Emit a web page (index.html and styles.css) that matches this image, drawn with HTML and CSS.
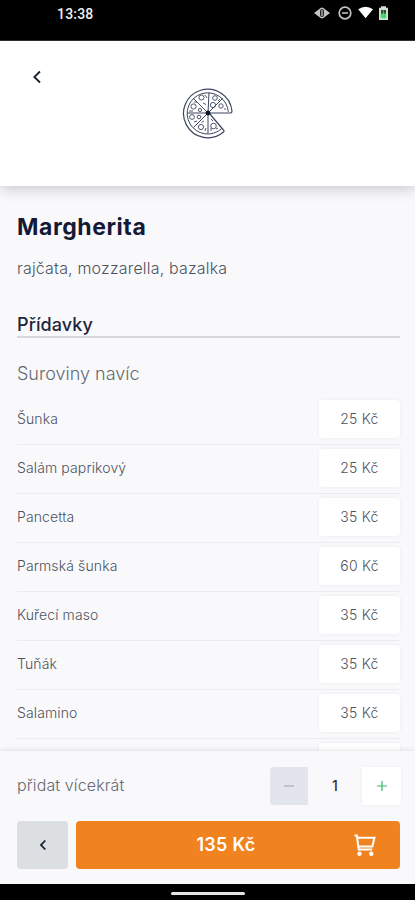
FILE: index.html
```html
<!DOCTYPE html>
<html lang="cs">
<head>
<meta charset="utf-8">
<meta name="viewport" content="width=device-width, initial-scale=1">
<title>Margherita</title>
<link rel="stylesheet" href="styles.css">
</head>
<body>
<div class="phone">
  <div class="status">
    <span class="clock">13:38</span>
    <svg class="status-icons" width="76" height="16" viewBox="0 0 76 16">
      <path d="M0 8 5 4.200Q8 .8 11 4.200L16 8l-5 3.800Q8 15.200 5 11.800z" fill="#c4c4c4"/>
      <rect x="6.500" y="4.500" width="3" height="7" rx="1" fill="#888" stroke="#222"/>
      <circle cx="31" cy="8" r="5.800" fill="none" stroke="#c4c4c4" stroke-width="1.700"/>
      <path d="M28 8h6" stroke="#c4c4c4" stroke-width="1.600"/>
      <path d="M44.200 4.300Q51.600-.8 59 4.300L51.600 13.300z" fill="#fff"/>
      <path d="M67 1.200h5v1.600h2V15h-9V2.800h2z" fill="#d6ddd6"/>
      <path d="M67 5h5v8h-5z" fill="#28522f"/>
      <path d="M69.500 5.500v6M67 9h5v4h-5z" stroke="#55e476" stroke-width=".7" fill="#46cf68"/>
    </svg>
  </div>
  <header class="header">
    <svg class="back-icon" width="10" height="14" viewBox="0 0 10 14"><path d="M8 1.500 2.300 7 8 12.500"/></svg>
    <svg class="pizza" width="52" height="52" viewBox="0 0 52 52">
      <g fill="none" stroke="#3c465f">
        <path stroke-width="1.200" d="M27 26h21.500q1.500 0 1.500-2A24.300 24.300 0 1 0 41.500 45q1-1 0-2z"/>
        <path stroke-width="1" d="M46.300 24.800A20.600 20.600 0 1 0 39.800 41.500"/>
        <path stroke-width="1" d="M26 26 11 11M26 26 27 5.500M26 26 41 11M26 26H5.500M26 26 11.500 40.500M26 26v20.500"/>
        <g stroke-width=".9">
          <circle cx="19.500" cy="10.500" r="2.500"/><circle cx="33" cy="11" r="2.300"/><circle cx="31" cy="18" r="2.600"/>
          <circle cx="11.500" cy="19.500" r="2.600"/><circle cx="18" cy="23" r="1.600"/><circle cx="10" cy="30" r="2.400"/>
          <circle cx="17" cy="30" r="1.800"/><circle cx="19" cy="40" r="2.600"/><circle cx="31.500" cy="39" r="2.800"/>
          <circle cx="39" cy="19" r="2.200"/><path d="m21 16 3 1.500M22 34l-2.500 1.500M29 32l2 2M12 35l3-1M34 42l2-1M42 22h2M29 44v-3M23 44l1-3M7 24h4M23 8l2 3M15 15l-3 0M36 14l2-2"/>
        </g>
      </g>
      <circle cx="26" cy="26" r="2.400" fill="#10182f"/>
    </svg>
  </header>
  <main class="content">
    <h1 class="title"><span>Margherita</span></h1>
    <p class="description"><span>rajčata, mozzarella, bazalka</span></p>
    <h2 class="section"><span>Přídavky</span></h2>
    <h3 class="group"><span>Suroviny navíc</span></h3>
    <ul class="extras">
      <li><span>Šunka</span><button class="price">25 Kč</button></li>
      <li><span>Salám paprikový</span><button class="price">25 Kč</button></li>
      <li><span>Pancetta</span><button class="price">35 Kč</button></li>
      <li><span>Parmská šunka</span><button class="price">60 Kč</button></li>
      <li><span>Kuřecí maso</span><button class="price">35 Kč</button></li>
      <li><span>Tuňák</span><button class="price">35 Kč</button></li>
      <li><span>Salamino</span><button class="price">35 Kč</button></li>
      <li><span></span><button class="price"></button></li>
    </ul>
  </main>
  <footer class="footer">
    <div class="quantity">
      <span class="quantity-label">přidat vícekrát</span>
      <div class="stepper">
        <button class="step minus"><svg width="12" height="12" viewBox="0 0 12 12"><path d="M1 6h10"/></svg></button>
        <span class="count">1</span>
        <button class="step plus"><svg width="12" height="12" viewBox="0 0 12 12"><path d="M1 6h10M6 1v10"/></svg></button>
      </div>
    </div>
    <div class="actions">
      <button class="back"><svg width="8" height="12" viewBox="0 0 8 12"><path d="M6.300 1.500 2 6l4.300 4.500"/></svg></button>
      <button class="order"><span>135 Kč</span>
        <svg class="cart" width="24" height="24" viewBox="0 0 24 24"><path d="M1.500 2.500h2.300l1.900 14h13.500M4.500 4.800h17l-2.200 8.700H5.500"/><circle cx="6.500" cy="20.800" r="2.200"/><circle cx="18.300" cy="20.800" r="2.200"/></svg>
      </button>
    </div>
  </footer>
  <div class="home"><i></i></div>
</div>
</body>
</html>
```
FILE: styles.css
```css
* { box-sizing: border-box; margin: 0; padding: 0; }
body { background: #f9f9fc; font-family: Inter, "Liberation Sans", sans-serif; color: #4e535c; }
button { border: 0; font: inherit; color: inherit; }
.phone { height: 900px; display: flex; flex-direction: column; overflow: hidden; }

.status { flex: none; height: 41px; background: #000; color: #eee; display: flex; justify-content: space-between; align-items: flex-start; padding: 5px 25.5px 0 57px; border-bottom: 1px solid #333; }
.clock { font: 500 14px/18px Roboto, sans-serif; letter-spacing: .2px; }
.status-icons { display: block; }

.header { flex: none; height: 145px; background: #fff; box-shadow: 0 2px 14px rgba(0, 0, 0, .22); display: grid; grid-template-columns: 1fr 52px 1fr; padding: 0 32px; z-index: 1; }
.back-icon { margin-top: 29px; fill: none; stroke: #171d33; stroke-width: 1.8; }
.pizza { margin-top: 46px; }

.content { flex: 1; min-height: 0; overflow: hidden; padding: 24px 15px 0 17px; }
.title { font-size: 23px; line-height: 34px; font-weight: 700; color: #141a35; letter-spacing: .55px; }
.description { margin-top: 12px; font-size: 16px; line-height: 24px; font-weight: 300; letter-spacing: .18px; }
.section { margin-top: 34px; height: 24px; border-bottom: 2px solid #d7d8db; font-size: 18px; line-height: 26px; font-weight: 500; color: #20253b; letter-spacing: .1px; }
.section span { position: relative; top: -2px; }
.group { margin-top: 23px; font-size: 18px; line-height: 26px; font-weight: 300; color: #656a72; }
.extras { list-style: none; margin-top: 9px; }
.extras li { height: 49px; display: flex; justify-content: space-between; align-items: flex-start; padding-top: 4px; border-bottom: 1px solid #ececf0; font-size: 14px; line-height: 38px; font-weight: 300; letter-spacing: .12px; }
.price { width: 81px; height: 38px; background: #fff; border-radius: 4px; box-shadow: 0 0 4px rgba(0, 0, 0, .06); letter-spacing: .25px; }

.footer { flex: none; height: 133px; background: #f9f9fc; box-shadow: 0 -1px 5px rgba(0, 0, 0, .1); padding: 16px 15px 0 17px; z-index: 1; }
.quantity { height: 38px; display: flex; justify-content: space-between; align-items: center; margin-right: -1px; }
.quantity-label { font-size: 16px; font-weight: 300; color: #656a72; padding-bottom: 2px; letter-spacing: .12px; }
.stepper { display: flex; align-items: center; }
.step { width: 38px; height: 38px; display: grid; place-items: center; }
.step svg { fill: none; stroke-width: 1.2; }
.minus { background: #e2e5ec; border-radius: 4px 0 0 4px; stroke: #a9aeb9; }
.plus { width: 39px; background: #fff; border-radius: 0 4px 4px 0; stroke: #36b866; box-shadow: 0 0 4px rgba(0, 0, 0, .06); }
.count { width: 54px; padding-bottom: 1px; text-align: center; font-size: 14px; font-weight: 500; color: #30343f; }
.actions { display: flex; gap: 8px; margin-top: 16px; height: 48px; }
.back { width: 51px; background: #dbdfe2; border-radius: 4px; display: grid; place-items: center; }
.back svg { fill: none; stroke: #171d33; stroke-width: 1.8; }
.order { flex: 1; background: #f08220; border-radius: 4px; color: #fff; font-size: 18px; font-weight: 600; letter-spacing: .3px; display: grid; grid-template-columns: 1fr auto 1fr; align-items: center; padding: 0 23px 2px; }
.order span { grid-column: 2; margin-right: 24px; }
.cart { justify-self: end; fill: none; stroke: #fff; stroke-width: 2; margin-top: 2px; }
.cart circle { fill: #fff; stroke: none; }
.home { flex: none; height: 16px; background: #000; display: flex; justify-content: center; padding-top: 8px; }
.home i { width: 74px; height: 3px; border-radius: 2px; background: #e4e4e4; }
```
